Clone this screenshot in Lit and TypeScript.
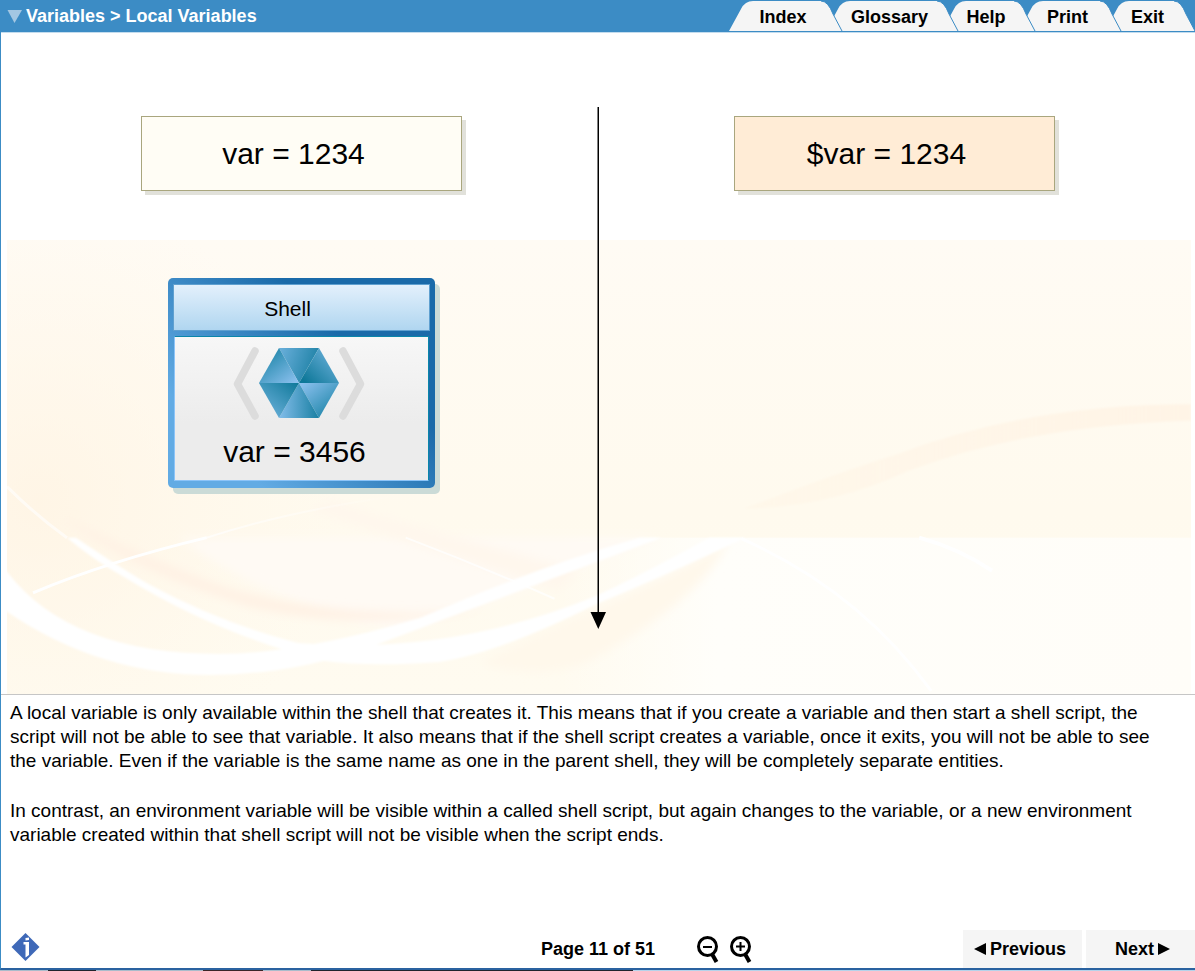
import { LitElement, html, css, svg } from "lit";
import { customElement, property } from "lit/decorators.js";

interface Tab {
  label: string;
  href: string;
  width: number;
}

const TABS: Tab[] = [
  { label: "Index", href: "#index", width: 113 },
  { label: "Glossary", href: "#glossary", width: 132 },
  { label: "Help", href: "#help", width: 93 },
  { label: "Print", href: "#print", width: 102 },
  { label: "Exit", href: "#exit", width: 90 },
];

const tabShape = (w: number) =>
  `M0 30 L12 8 Q16 0 24 0 H${w - 21} Q${w - 14} 0 ${w - 9} 13 L${w} 30 Z`;

const tabEdge = (w: number) => `M${w - 21} 0 Q${w - 14} 0 ${w - 9} 13 L${w} 30`;

@customElement("course-header")
export class CourseHeader extends LitElement {
  static styles = css`
    :host {
      display: block;
    }
    .bar {
      display: flex;
      justify-content: space-between;
      height: 32px;
      background: #3c8cc5;
      border-bottom: 1px solid #c3dcee;
      font-size: 18px;
      font-weight: bold;
    }
    .crumbs {
      display: flex;
      align-items: center;
      gap: 4px;
      padding-left: 6px;
      color: #fff;
    }
    .toggle {
      display: flex;
      padding: 0;
      border: 0;
      background: none;
      cursor: pointer;
    }
    .tabs {
      display: flex;
      padding-top: 1px;
      isolation: isolate;
    }
    .tab {
      position: relative;
      display: grid;
      height: 30px;
      color: #000;
      text-decoration: none;
    }
    .tab + .tab {
      margin-left: -16px;
    }
    .shape,
    .label {
      grid-area: 1 / 1;
    }
    .shape {
      overflow: visible;
    }
    .label {
      align-self: center;
      text-align: center;
      padding: 2px 5px 0 0;
    }
  `;

  render() {
    return html`
      <header class="bar">
        <div class="crumbs">
          <button class="toggle" aria-label="Show menu">
            <svg width="15" height="13" viewBox="0 0 15 13">
              <path d="M0.500 0H15L7.500 13Z" fill="#a3c7e3" />
            </svg>
          </button>
          <span>Variables &gt; Local Variables</span>
        </div>
        <nav class="tabs">
          ${TABS.map(
            (t, i) => html`
              <a class="tab" href=${t.href} style="width:${t.width}px;z-index:${TABS.length - i}">
                <svg class="shape" width=${t.width} height="30" aria-hidden="true">
                  <path d=${tabShape(t.width)} fill="#f5f5f5" />
                  <path d=${tabEdge(t.width)} fill="none" stroke="#3c8cc5" />
                </svg>
                <span class="label">${t.label}</span>
              </a>
            `
          )}
        </nav>
      </header>
    `;
  }
}

@customElement("wave-backdrop")
export class WaveBackdrop extends LitElement {
  static styles = css`
    :host {
      display: block;
    }
    .waves {
      display: block;
      width: 100%;
      height: 100%;
    }
  `;

  render() {
    return html`
      <svg class="waves" viewBox="7 240 1185 453" preserveAspectRatio="none" aria-hidden="true">
        <defs>
          <linearGradient id="base" x1="0" y1="0" x2="0" y2="1">
            <stop offset="0" stop-color="#fffbf4" />
            <stop offset="0.6" stop-color="#fffaee" />
            <stop offset="1" stop-color="#fffbf0" />
          </linearGradient>
          <radialGradient id="glow" gradientUnits="userSpaceOnUse" cx="40" cy="500" r="300">
            <stop offset="0" stop-color="#fff3e2" stop-opacity="0.7" />
            <stop offset="1" stop-color="#fff6e8" stop-opacity="0" />
          </radialGradient>
          <linearGradient id="pale" x1="0" y1="0" x2="1" y2="0">
            <stop offset="0" stop-color="#fffefa" stop-opacity="0" />
            <stop offset="0.25" stop-color="#fffefa" />
            <stop offset="1" stop-color="#fffdf8" />
          </linearGradient>
          <linearGradient id="faint" gradientUnits="userSpaceOnUse" x1="207" y1="0" x2="400" y2="0">
            <stop offset="0" stop-color="#fff" stop-opacity="0.7" />
            <stop offset="1" stop-color="#fff" stop-opacity="0" />
          </linearGradient>
          <linearGradient id="ribbon" gradientUnits="userSpaceOnUse" x1="740" y1="0" x2="1192" y2="0">
            <stop offset="0" stop-color="#fff5e6" stop-opacity="0.5" />
            <stop offset="1" stop-color="#fff4e6" />
          </linearGradient>
          <filter id="soft" x="-10%" y="-20%" width="120%" height="140%">
            <feGaussianBlur stdDeviation="5" />
          </filter>
          <filter id="slight" x="-5%" y="-10%" width="110%" height="120%">
            <feGaussianBlur stdDeviation="1" />
          </filter>
        </defs>
        <rect x="7" y="240" width="1185" height="453" fill="url(#base)" />
        <rect x="7" y="240" width="400" height="453" fill="url(#glow)" />
        <rect x="560" y="537" width="632" height="156" fill="url(#pale)" />
        <path d="M180 537H660Q500 600 400 630Q260 600 180 537Z" fill="#fffaf4" filter="url(#soft)" />
        <path d="M60 515Q150 560 230 588Q350 622 490 608Q360 632 250 606Q130 570 60 515Z" fill="#fff1e4" filter="url(#soft)" />
        <path d="M310 510Q420 545 560 590L580 570Q430 530 330 500Z" fill="#fff7ed" filter="url(#soft)" />
        <path d="M590 610Q680 570 730 540Q700 600 590 660Q540 680 480 662Z" fill="#fff8eb" filter="url(#soft)" />
        <path d="M745 508Q830 475 900 453Q1030 404 1192 404V420Q1030 425 910 470Q830 507 745 508Z" fill="url(#ribbon)" filter="url(#slight)" />
        <g fill="#fff" filter="url(#slight)">
          <path d="M0 564L7 571Q70 653 220 653Q300 653 421 617Q540 565 640 537H662Q530 586 371 646Q290 674 210 674Q100 674 7 611L0 606Z" />
          <path d="M67 537H76Q122 568 150 584Q220 622 298 642Q450 655 597 595Q650 570 710 537H746Q660 577 597 603Q500 652 440 661Q370 666 325 660Q220 635 122 575Q95 560 67 537Z" />
        </g>
        <g fill="none" stroke="#fff">
          <path d="M7 486Q36 515 67 537" stroke-width="3" opacity="0.6" />
          <path d="M33 592Q110 560 207 537" stroke-width="3" />
          <path d="M207 537Q290 510 400 495" stroke="url(#faint)" stroke-width="2" />
          <path d="M406 537Q480 565 555 598" stroke-width="2" opacity="0.7" />
          <path d="M742 538Q860 590 932 690" stroke-width="3" />
          <path d="M920 537Q960 548 993 570" stroke-width="4" />
        </g>
      </svg>
    `;
  }
}

@customElement("shell-card")
export class ShellCard extends LitElement {
  @property() name = "";
  @property() value = "";

  static styles = css`
    :host {
      display: block;
    }
    .card {
      display: grid;
      grid-template-rows: 45px 145px;
      gap: 6px;
      padding: 7px 6px;
      border-radius: 5px;
      background: linear-gradient(225deg, #1a6aa9 32%, #62abe4 80%);
      box-shadow: 5px 6px 0 #cbdbd7;
    }
    .title {
      display: flex;
      align-items: center;
      justify-content: center;
      padding: 2px 28px 0 0;
      background: linear-gradient(#e3f0fc, #b0d6f0);
      box-shadow: 0 0 0 1px #5fa0d0;
      font-size: 21px;
    }
    .body {
      display: flex;
      flex-direction: column;
      align-items: center;
      gap: 13px;
      padding: 10px 6px 0 0;
      background: linear-gradient(#f7f7f7, #ececec 60%);
      border-style: solid;
      border-width: 1px;
      border-color: #0a86aa #0a86aa #8cc4f8 #8cc4f8;
    }
    .value {
      padding-right: 8px;
      font-size: 30px;
      line-height: 36px;
    }
  `;

  private facet(points: string, id: string) {
    return svg`<polygon points=${points} fill="url(#${id})" />`;
  }

  render() {
    return html`
      <section class="card">
        <div class="title">${this.name}</div>
        <div class="body">
          <svg width="132" height="74" viewBox="233 347 132 74" aria-hidden="true">
            <defs>
              <linearGradient id="a" x1="0" y1="0" x2="1" y2="0.3">
                <stop offset="0" stop-color="#6bb0dc" />
                <stop offset="1" stop-color="#1f82a6" />
              </linearGradient>
              <linearGradient id="b" x1="1" y1="0.1" x2="0.1" y2="0.9">
                <stop offset="0" stop-color="#73b5e0" />
                <stop offset="1" stop-color="#0e7899" />
              </linearGradient>
              <linearGradient id="c" x1="0.1" y1="0" x2="0.8" y2="0.8">
                <stop offset="0" stop-color="#8bc0ee" />
                <stop offset="1" stop-color="#268aae" />
              </linearGradient>
              <linearGradient id="d" x1="0" y1="0.2" x2="1" y2="0.2">
                <stop offset="0" stop-color="#83bdea" />
                <stop offset="1" stop-color="#187fa2" />
              </linearGradient>
              <linearGradient id="e" x1="0.1" y1="1" x2="1" y2="0">
                <stop offset="0" stop-color="#73b5e0" />
                <stop offset="1" stop-color="#0e7899" />
              </linearGradient>
              <linearGradient id="f" x1="0.9" y1="1" x2="0.2" y2="0.2">
                <stop offset="0" stop-color="#8bc0ee" />
                <stop offset="1" stop-color="#268aae" />
              </linearGradient>
            </defs>
            <g fill="none" stroke="#dcdcdc" stroke-width="7.500" stroke-linecap="round" stroke-linejoin="round">
              <path d="M255 351L237.500 384L255 416" />
              <path d="M343 351L360.500 384L343 416" />
            </g>
            ${this.facet("279,348 319,348 299,383", "a")}
            ${this.facet("319,348 339,383 299,383", "b")}
            ${this.facet("339,383 319,418 299,383", "c")}
            ${this.facet("319,418 279,418 299,383", "d")}
            ${this.facet("279,418 259,383 299,383", "e")}
            ${this.facet("259,383 279,348 299,383", "f")}
          </svg>
          <div class="value">${this.value}</div>
        </div>
      </section>
    `;
  }
}

@customElement("course-footer")
export class CourseFooter extends LitElement {
  static styles = css`
    :host {
      display: block;
    }
    .footer {
      display: grid;
      grid-template-columns: 1fr auto 1fr;
      align-items: center;
      height: 38px;
      font-size: 18px;
      font-weight: bold;
    }
    button {
      display: flex;
      align-items: center;
      justify-content: center;
      padding: 0;
      border: 0;
      background: none;
      color: #000;
      font: inherit;
      cursor: pointer;
    }
    .info {
      justify-self: start;
      margin: 0 0 5px 10px;
    }
    .right,
    .zoom,
    .pager {
      display: flex;
    }
    .right {
      align-self: stretch;
      justify-content: space-between;
      padding-left: 42px;
    }
    .zoom {
      gap: 10px;
    }
    .pager {
      gap: 4px;
    }
    .pager button {
      box-sizing: border-box;
      gap: 4px;
      width: 119px;
      padding-right: 5px;
      background: #f5f5f5;
    }
    .pager .next {
      width: 109px;
      padding: 0 0 0 4px;
    }
  `;

  private glass(mark: string) {
    return html`
      <svg width="23" height="27" viewBox="0 0 23 27" fill="none" stroke="#000" aria-hidden="true">
        <circle cx="10.500" cy="10.500" r="9" stroke-width="3" />
        <path d="M15 18L19.500 26" stroke-width="4" />
        <path d=${mark} stroke-width="2" />
      </svg>
    `;
  }

  render() {
    return html`
      <footer class="footer">
        <button class="info" aria-label="Information">
          <svg width="29" height="28" viewBox="0 0 29 28" aria-hidden="true">
            <path d="M14.500 0L28.500 14L14.500 28L0.500 14Z" fill="#3f69b8" />
            <path d="M14.500 5L18 4.500V7L14.500 7.500ZM12.500 9H18V22L14.500 24.500V11.500H12.500Z" fill="#fff" />
          </svg>
        </button>
        <span>Page 11 of 51</span>
        <div class="right">
          <div class="zoom">
            <button aria-label="Zoom out">${this.glass("M6 11H15")}</button>
            <button aria-label="Zoom in">${this.glass("M6 10.500H15M10.500 6V15")}</button>
          </div>
          <div class="pager">
            <button>
              <svg width="12" height="12" aria-hidden="true"><path d="M12 0V12L0 6Z" /></svg>
              Previous
            </button>
            <button class="next">
              Next
              <svg width="12" height="12" aria-hidden="true"><path d="M0 0V12L12 6Z" /></svg>
            </button>
          </div>
        </div>
      </footer>
    `;
  }
}

@customElement("app-root")
export class AppRoot extends LitElement {
  static styles = css`
    :host {
      display: flex;
      flex-direction: column;
      box-sizing: border-box;
      min-height: 100vh;
      background: #fff;
      color: #000;
      font-family: "Liberation Sans", Arial, sans-serif;
    }
    .page {
      flex: 1;
      display: flex;
      flex-direction: column;
      border-left: 1px solid #3c8cc5;
      border-bottom: 2px solid #2a62a0;
    }
    .stage {
      display: grid;
      border-bottom: 1px solid #c6c6c6;
    }
    .backdrop,
    .diagram {
      grid-area: 1 / 1;
    }
    .backdrop {
      margin: 207px 4px 0 6px;
    }
    .diagram {
      display: grid;
      grid-template-columns: 1fr auto 1fr;
      padding: 74px 12px 65px;
      isolation: isolate;
    }
    .column {
      display: flex;
      flex-direction: column;
      align-items: center;
      gap: 87px;
      padding-top: 9px;
    }
    .box {
      display: flex;
      align-items: center;
      justify-content: center;
      box-sizing: border-box;
      width: 321px;
      height: 75px;
      padding-right: 16px;
      border: 1px solid #a9a67e;
      background: #fffdf5;
      box-shadow: 4px 4px 0 #e1e1da;
      font-size: 30px;
    }
    .inherited {
      background: #ffecd6;
    }
    .card {
      width: 267px;
    }
    .notes {
      flex: 1;
      padding: 6px 24px 24px 9px;
      font-size: 19px;
      line-height: 24px;
    }
    .notes p {
      margin: 0 0 26px;
    }
    .edge {
      height: 1px;
      background: linear-gradient(90deg, #a9bccb 4%, #20242c 4% 8%, #a9bccb 8% 17%, #3a2628 17% 22%, #a9bccb 22% 26%, #20242c 26% 53%, #b5d3ea 53%);
    }
  `;

  render() {
    return html`
      <div class="page">
        <course-header></course-header>
        <main class="stage">
          <wave-backdrop class="backdrop"></wave-backdrop>
          <div class="diagram">
            <div class="column">
              <div class="box">var = 1234</div>
              <shell-card class="card" name="Shell" value="var = 3456"></shell-card>
            </div>
            <svg width="16" height="522" viewBox="0 0 16 522" aria-hidden="true">
              <path d="M7.500 0H9V505H16L8.300 522L0.500 505H7.500Z" />
            </svg>
            <div class="column">
              <div class="box inherited">$var = 1234</div>
            </div>
          </div>
        </main>
        <article class="notes">
          <p>
            A local variable is only available within the shell that creates it. This means that if you create a
            variable and then start a shell script, the script will not be able to see that variable. It also means
            that if the shell script creates a variable, once it exits, you will not be able to see the variable. Even
            if the variable is the same name as one in the parent shell, they will be completely separate entities.
          </p>
          <p>
            In contrast, an environment variable will be visible within a called shell script, but again changes to
            the variable, or a new environment variable created within that shell script will not be visible when the
            script ends.
          </p>
        </article>
        <course-footer></course-footer>
      </div>
      <div class="edge"></div>
    `;
  }
}
